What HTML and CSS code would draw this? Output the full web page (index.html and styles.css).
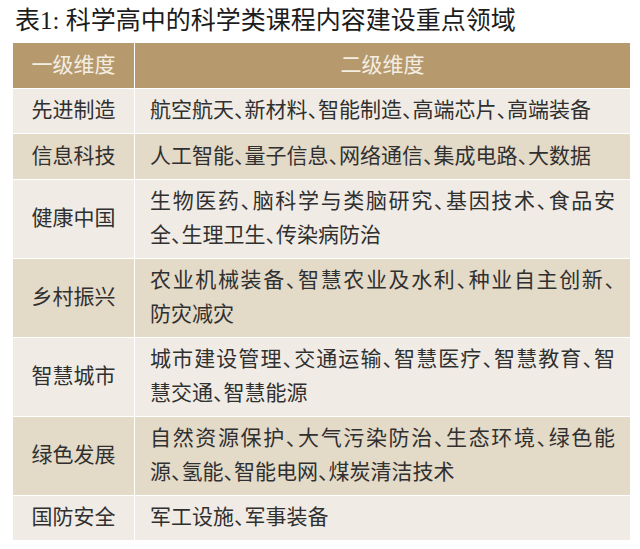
FILE: index.html
```html
<!DOCTYPE html>
<html lang="zh-CN">
<head>
<meta charset="utf-8">
<title>表1</title>
<link rel="stylesheet" href="styles.css">
</head>
<body>
<h1 class="title">表1: 科学高中的科学类课程内容建设重点领域</h1>
<div class="grid">
  <div class="cell head c1">一级维度</div>
  <div class="cell head c2">二级维度</div>

  <div class="cell light c1">先进制造</div>
  <div class="cell light c2"><span class="ln">航空航天、新材料、智能制造、高端芯片、高端装备</span></div>

  <div class="cell dark c1">信息科技</div>
  <div class="cell dark c2"><span class="ln">人工智能、量子信息、网络通信、集成电路、大数据</span></div>

  <div class="cell light c1">健康中国</div>
  <div class="cell light c2"><span class="ln just">生物医药、脑科学与类脑研究、基因技术、食品安</span><span class="ln">全、生理卫生、传染病防治</span></div>

  <div class="cell dark c1">乡村振兴</div>
  <div class="cell dark c2"><span class="ln just">农业机械装备、智慧农业及水利、种业自主创新、</span><span class="ln">防灾减灾</span></div>

  <div class="cell light c1">智慧城市</div>
  <div class="cell light c2"><span class="ln just">城市建设管理、交通运输、智慧医疗、智慧教育、智</span><span class="ln">慧交通、智慧能源</span></div>

  <div class="cell dark c1">绿色发展</div>
  <div class="cell dark c2"><span class="ln just">自然资源保护、大气污染防治、生态环境、绿色能</span><span class="ln">源、氢能、智能电网、煤炭清洁技术</span></div>

  <div class="cell light c1">国防安全</div>
  <div class="cell light c2"><span class="ln">军工设施、军事装备</span></div>
</div>
</body>
</html>
```
FILE: styles.css
```css
html, body {
  margin: 0;
  padding: 0;
  background: #ffffff;
}

body {
  font-family: "Liberation Serif", "Noto Sans CJK SC", serif;
  color: #303030;
}

.title {
  margin: 6px 0 7px 15px;
  font-size: 25px;
  line-height: 30px;
  font-weight: normal;
  color: #1c1c1c;
  white-space: nowrap;
}

.grid {
  display: grid;
  grid-template-columns: 121px 495px;
  column-gap: 1px;
  row-gap: 1px;
  margin-left: 13px;
  width: 617px;
  background: #ffffff;
}

.cell {
  font-size: 21px;
  line-height: 33.5px;
  padding: 5.5px 15px;
  display: flex;
  flex-direction: column;
  justify-content: center;
  font-feature-settings: "halt";
}

.c1 {
  align-items: center;
  padding-left: 4px;
  padding-right: 4px;
  text-align: center;
}

.c2 {
  padding-left: 15px;
  padding-right: 15px;
}

.head {
  background: #b69a6e;
  color: #f4ede2;
  padding-top: 5.5px;
  padding-bottom: 5.5px;
}

.head.c2 {
  align-items: center;
}

.light {
  background: #f0ece5;
}

.dark {
  background: #e4dac8;
}

.ln {
  display: block;
  white-space: nowrap;
}

.just {
  text-align: justify;
  text-align-last: justify;
  text-justify: inter-character;
}
```
